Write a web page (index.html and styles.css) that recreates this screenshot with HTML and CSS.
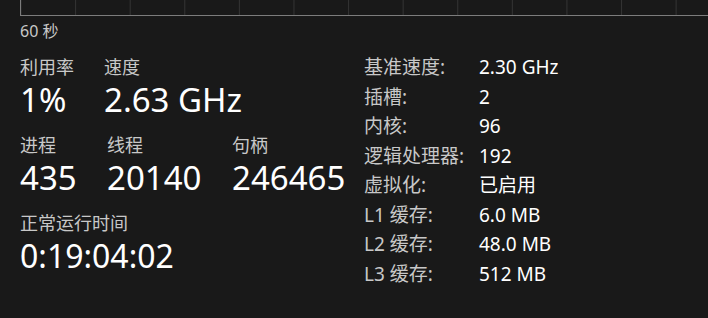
FILE: index.html
```html
<!DOCTYPE html>
<html lang="zh-CN">
<head>
  <meta charset="UTF-8" />
  <meta name="viewport" content="width=device-width, initial-scale=1.0" />
  <title>CPU - 性能</title>
  <link rel="stylesheet" href="styles.css">
</head>
<body>
  <div class="page">
    <div class="chart"></div>
    <div class="axis-label">60 秒</div>

    <div class="details">
      <div class="stats">
        <div class="stat-row row-1">
          <div class="stat">
            <div class="stat-label">利用率</div>
            <div class="stat-value">1%</div>
          </div>
          <div class="stat">
            <div class="stat-label">速度</div>
            <div class="stat-value">2.63 GHz</div>
          </div>
        </div>

        <div class="stat-row row-2">
          <div class="stat">
            <div class="stat-label">进程</div>
            <div class="stat-value">435</div>
          </div>
          <div class="stat">
            <div class="stat-label">线程</div>
            <div class="stat-value">20140</div>
          </div>
          <div class="stat">
            <div class="stat-label">句柄</div>
            <div class="stat-value">246465</div>
          </div>
        </div>

        <div class="stat-row">
          <div class="stat">
            <div class="stat-label">正常运行时间</div>
            <div class="stat-value uptime">0:19:04:02</div>
          </div>
        </div>
      </div>

      <dl class="specs">
        <dt>基准速度:</dt><dd>2.30 GHz</dd>
        <dt>插槽:</dt><dd>2</dd>
        <dt>内核:</dt><dd>96</dd>
        <dt>逻辑处理器:</dt><dd>192</dd>
        <dt>虚拟化:</dt><dd>已启用</dd>
        <dt>L1 缓存:</dt><dd>6.0 MB</dd>
        <dt>L2 缓存:</dt><dd>48.0 MB</dd>
        <dt>L3 缓存:</dt><dd>512 MB</dd>
      </dl>
    </div>
  </div>
</body>
</html>
```

FILE: styles.css
```css
:root {
  --bg: #191919;
  --label: #c8c8c8;
  --value: #ffffff;
  --axis: #7c7c7c;
  --grid: #333333;
}

* {
  box-sizing: border-box;
}

body {
  margin: 0;
  background-color: var(--bg);
  color: var(--value);
  font-family: "Noto Sans", "Noto Sans CJK SC", sans-serif;
  overflow: hidden;
}

.page {
  padding-left: 20px;
}

.chart {
  width: 720px;
  height: 16px;
  border-left: 1px solid var(--axis);
  border-bottom: 1px solid var(--axis);
  background-image: linear-gradient(to right, var(--grid) 1px, transparent 1px);
  background-size: 54.6px 100%;
  background-position: -0.5px 0;
}

.axis-label {
  margin-top: 5px;
  font-size: 16px;
  line-height: 20px;
  color: var(--label);
}

.details {
  display: flex;
  margin-top: 14px;
}

.stats {
  width: 344px;
}

.stat-row {
  display: grid;
  margin-bottom: 12px;
}

.row-1 {
  grid-template-columns: 84px auto;
}

.row-2 {
  grid-template-columns: 87px 125px auto;
}

.stat-label {
  font-size: 18px;
  line-height: 24px;
  color: var(--label);
}

.stat-value {
  font-size: 33px;
  line-height: 42px;
  color: var(--value);
}

.uptime {
  font-size: 32px;
}

.specs {
  display: grid;
  grid-template-columns: 115px auto;
  margin: -2px 0 0;
  font-size: 19px;
  line-height: 29px;
}

.specs dt {
  color: var(--label);
}

.specs dd {
  margin: 0;
  color: var(--value);
}
```
